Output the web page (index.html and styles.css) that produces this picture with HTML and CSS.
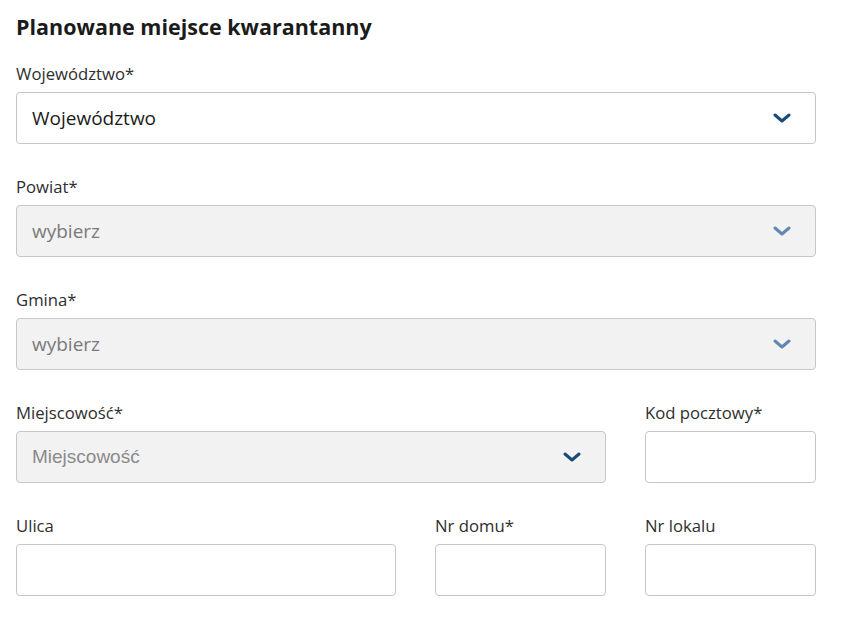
FILE: index.html
```html
<!DOCTYPE html>
<html lang="pl">
<head>
<meta charset="utf-8">
<title>Planowane miejsce kwarantanny</title>
<link rel="stylesheet" href="styles.css">
</head>
<body>
<main class="page">
  <h2 class="title">Planowane miejsce kwarantanny</h2>
  <div class="form">
    <div class="field span-3">
      <label class="label">Województwo*</label>
      <div class="select">
        <span class="value">Województwo</span>
        <svg class="chev" width="18" height="10" viewBox="0 0 18 10"><path d="M2 2 L9 8 L16 2" fill="none" stroke="#1b4a78" stroke-width="3" stroke-linecap="round" stroke-linejoin="round"/></svg>
      </div>
    </div>
    <div class="field span-3">
      <label class="label">Powiat*</label>
      <div class="select disabled">
        <span class="value muted">wybierz</span>
        <svg class="chev" width="18" height="10" viewBox="0 0 18 10"><path d="M2 2 L9 8 L16 2" fill="none" stroke="#5f89b0" stroke-width="3" stroke-linecap="round" stroke-linejoin="round"/></svg>
      </div>
    </div>
    <div class="field span-3">
      <label class="label">Gmina*</label>
      <div class="select disabled">
        <span class="value muted">wybierz</span>
        <svg class="chev" width="18" height="10" viewBox="0 0 18 10"><path d="M2 2 L9 8 L16 2" fill="none" stroke="#5f89b0" stroke-width="3" stroke-linecap="round" stroke-linejoin="round"/></svg>
      </div>
    </div>
    <div class="field span-2">
      <label class="label">Miejscowość*</label>
      <div class="select disabled">
        <span class="value placeholder">Miejscowość</span>
        <svg class="chev" width="18" height="10" viewBox="0 0 18 10"><path d="M2 2 L9 8 L16 2" fill="none" stroke="#1b4a78" stroke-width="3" stroke-linecap="round" stroke-linejoin="round"/></svg>
      </div>
    </div>
    <div class="field">
      <label class="label">Kod pocztowy*</label>
      <div class="input"></div>
    </div>
    <div class="field">
      <label class="label">Ulica</label>
      <div class="input"></div>
    </div>
    <div class="field">
      <label class="label">Nr domu*</label>
      <div class="input"></div>
    </div>
    <div class="field">
      <label class="label">Nr lokalu</label>
      <div class="input"></div>
    </div>
  </div>
</main>
</body>
</html>
```

FILE: styles.css
```css
html, body {
  margin: 0;
  padding: 0;
  background: #ffffff;
}
body {
  font-family: "Open Sans", "DejaVu Sans", sans-serif;
  color: #1b1b1b;
}
.page {
  padding: 13px 16px 0 16px;
  width: 800px;
}
.title {
  margin: 0 0 21px 0;
  font-size: 21.5px;
  line-height: 28px;
  font-weight: 700;
  color: #1b1b1b;
}
.form {
  display: grid;
  grid-template-columns: 380px 171px 171px;
  column-gap: 39px;
  row-gap: 31px;
}
.field {
  display: flex;
  flex-direction: column;
  gap: 6px;
}
.span-3 { grid-column: span 3; }
.span-2 { grid-column: span 2; }
.label {
  font-size: 16.7px;
  line-height: 24px;
  color: #2e2e2e;
}
.select, .input {
  box-sizing: border-box;
  height: 52px;
  border: 1px solid #c6c6c6;
  border-radius: 4px;
  background: #ffffff;
}
.select {
  display: flex;
  align-items: center;
  justify-content: space-between;
  padding: 0 24px 0 15px;
}
.select.disabled {
  background: #f2f2f2;
}
.value {
  font-size: 19px;
  line-height: 24px;
  color: #1b1b1b;
}
.value.muted {
  color: #7a7a7a;
}
.value.placeholder {
  font-family: "Liberation Sans", Arial, sans-serif;
  color: #8a8a8a;
}
.chev {
  display: block;
}
```
